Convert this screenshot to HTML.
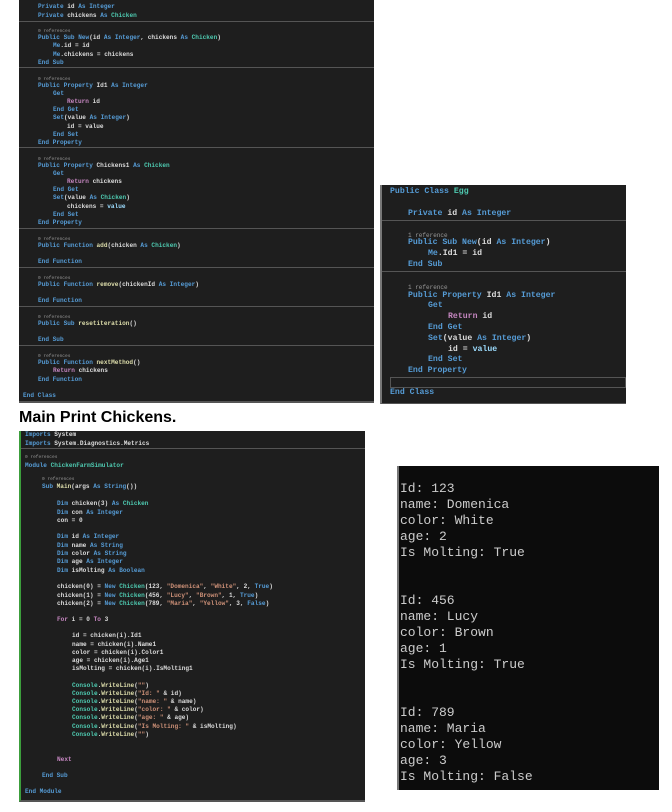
<!DOCTYPE html>
<html><head><meta charset="utf-8"><style>
*{margin:0;padding:0;box-sizing:border-box}
body{width:672px;height:812px;background:#fff;position:relative;overflow:hidden;font-family:"Liberation Mono",monospace}
.box{position:absolute;background:#1e1e1e;overflow:hidden}
.l{position:absolute;white-space:pre;line-height:1}
.s .l{font-size:6.1px;font-weight:bold;color:#dcdcdc}
.e .l{font-size:8.2px;color:#dcdcdc;font-weight:bold}
.box .r{font-size:4.5px;font-weight:normal;color:#999}
.box.e .r{font-size:6px}
.box .k{color:#569cd6}.box .t{color:#4ec9b0}.box .p{color:#c586c0}.box .q{color:#ce9178}.box .v{color:#9cdcfe}.box .w{color:#dcdcdc}.box .f{color:#dcdcaa}
.sep{position:absolute;left:0;right:0;height:1px;background:#555}
.con{position:absolute;left:397px;top:466px;width:262px;height:324px;background:#0c0c0c;border-left:2px solid #777}
.con div{position:absolute;left:1px;font-size:13px;color:#cccccc;white-space:pre;line-height:1}
</style></head><body>

<div class="box s" style="left:19px;top:0;width:355px;height:403px;border-bottom:2px solid #555">
<div class="l k" style="left:19px;top:4px">Private <span class="w">id</span> As Integer</div>
<div class="l k" style="left:19px;top:13px">Private <span class="w">chickens</span> As <span class="t">Chicken</span></div>
<div class="sep" style="top:21px"></div>
<div class="l r" style="left:19px;top:30px">0 references</div>
<div class="l k" style="left:19px;top:35px">Public Sub New<span class="w">(id</span> As Integer<span class="w">, chickens</span> As <span class="t">Chicken</span><span class="w">)</span></div>
<div class="l" style="left:34px;top:43px"><span class="k">Me</span>.id = id</div>
<div class="l" style="left:34px;top:52px"><span class="k">Me</span>.chickens = chickens</div>
<div class="l k" style="left:19px;top:60px">End Sub</div>
<div class="sep" style="top:67px"></div>
<div class="l r" style="left:19px;top:78px">0 references</div>
<div class="l k" style="left:19px;top:83px">Public Property <span class="w">Id1</span> As Integer</div>
<div class="l k" style="left:34px;top:91px">Get</div>
<div class="l" style="left:48px;top:99px"><span class="p">Return</span> id</div>
<div class="l k" style="left:34px;top:107px">End Get</div>
<div class="l k" style="left:34px;top:115px">Set<span class="w">(value</span> As Integer<span class="w">)</span></div>
<div class="l" style="left:48px;top:124px">id = value</div>
<div class="l k" style="left:34px;top:132px">End Set</div>
<div class="l k" style="left:19px;top:140px">End Property</div>
<div class="sep" style="top:147px"></div>
<div class="l r" style="left:19px;top:158px">0 references</div>
<div class="l k" style="left:19px;top:163px">Public Property <span class="w">Chickens1</span> As <span class="t">Chicken</span></div>
<div class="l k" style="left:34px;top:171px">Get</div>
<div class="l" style="left:48px;top:179px"><span class="p">Return</span> chickens</div>
<div class="l k" style="left:34px;top:187px">End Get</div>
<div class="l k" style="left:34px;top:195px">Set<span class="w">(value</span> As <span class="t">Chicken</span><span class="w">)</span></div>
<div class="l" style="left:48px;top:204px">chickens = <span class="v">value</span></div>
<div class="l k" style="left:34px;top:212px">End Set</div>
<div class="l k" style="left:19px;top:220px">End Property</div>
<div class="sep" style="top:228px"></div>
<div class="l r" style="left:19px;top:238px">0 references</div>
<div class="l k" style="left:19px;top:243px">Public Function <span class="f">add</span><span class="w">(chicken</span> As <span class="t">Chicken</span><span class="w">)</span></div>
<div class="l k" style="left:19px;top:259px">End Function</div>
<div class="sep" style="top:267px"></div>
<div class="l r" style="left:19px;top:277px">0 references</div>
<div class="l k" style="left:19px;top:282px">Public Function <span class="f">remove</span><span class="w">(chickenId</span> As Integer<span class="w">)</span></div>
<div class="l k" style="left:19px;top:298px">End Function</div>
<div class="sep" style="top:306px"></div>
<div class="l r" style="left:19px;top:316px">0 references</div>
<div class="l k" style="left:19px;top:321px">Public Sub <span class="f">resetiteration</span><span class="w">()</span></div>
<div class="l k" style="left:19px;top:337px">End Sub</div>
<div class="sep" style="top:345px"></div>
<div class="l r" style="left:19px;top:355px">0 references</div>
<div class="l k" style="left:19px;top:360px">Public Function <span class="f">nextMethod</span><span class="w">()</span></div>
<div class="l" style="left:34px;top:368px"><span class="p">Return</span> chickens</div>
<div class="l k" style="left:19px;top:377px">End Function</div>
<div class="l k" style="left:4px;top:393px">End Class</div>
</div>

<div class="box e" style="left:380px;top:185px;width:246px;height:219px;border-left:2px solid #777;border-bottom:1px solid #555">
<div class="l k" style="left:8px;top:3px">Public Class <span class="t">Egg</span></div>
<div class="l k" style="left:26px;top:25px">Private <span class="w">id</span> As Integer</div>
<div class="sep" style="top:35px"></div>
<div class="l r" style="left:26px;top:48px">1 reference</div>
<div class="l k" style="left:26px;top:54px">Public Sub New<span class="w">(id</span> As Integer<span class="w">)</span></div>
<div class="l" style="left:46px;top:65px"><span class="k">Me</span>.Id1 = id</div>
<div class="l k" style="left:26px;top:76px">End Sub</div>
<div class="sep" style="top:86px"></div>
<div class="l r" style="left:26px;top:100px">1 reference</div>
<div class="l k" style="left:26px;top:107px">Public Property <span class="w">Id1</span> As Integer</div>
<div class="l k" style="left:46px;top:117px">Get</div>
<div class="l" style="left:66px;top:128px"><span class="p">Return</span> id</div>
<div class="l k" style="left:46px;top:139px">End Get</div>
<div class="l k" style="left:46px;top:150px">Set<span class="w">(value</span> As Integer<span class="w">)</span></div>
<div class="l" style="left:66px;top:161px">id = <span class="v">value</span></div>
<div class="l k" style="left:46px;top:171px">End Set</div>
<div class="l k" style="left:26px;top:182px">End Property</div>
<div style="position:absolute;left:8px;right:0;top:192px;height:11px;border:1px solid #555"></div>
<div class="l k" style="left:8px;top:204px">End Class</div>
</div>

<div style="position:absolute;left:19px;top:409px;font:bold 16px 'Liberation Sans',sans-serif;color:#000">Main Print Chickens.</div>

<div class="box s" style="left:19px;top:431px;width:346px;height:371px;border-left:2px solid #3c9e3c;border-bottom:2px solid #555">
<div class="l k" style="left:4px;top:1px">Imports <span class="w">System</span></div>
<div class="l k" style="left:4px;top:10px">Imports <span class="w">System.Diagnostics.Metrics</span></div>
<div class="sep" style="top:17px"></div>
<div class="l r" style="left:4px;top:25px">0 references</div>
<div class="l k" style="left:4px;top:32px">Module <span class="t">ChickenFarmSimulator</span></div>
<div class="l r" style="left:21px;top:47px">0 references</div>
<div class="l k" style="left:21px;top:53px">Sub <span class="f">Main</span><span class="w">(args</span> As String<span class="w">())</span></div>
<div class="l k" style="left:36px;top:70px">Dim <span class="w">chicken(3)</span> As <span class="t">Chicken</span></div>
<div class="l k" style="left:36px;top:79px">Dim <span class="w">con</span> As Integer</div>
<div class="l" style="left:36px;top:87px">con = 0</div>
<div class="l k" style="left:36px;top:103px">Dim <span class="w">id</span> As Integer</div>
<div class="l k" style="left:36px;top:112px">Dim <span class="w">name</span> As String</div>
<div class="l k" style="left:36px;top:120px">Dim <span class="w">color</span> As String</div>
<div class="l k" style="left:36px;top:128px">Dim <span class="w">age</span> As Integer</div>
<div class="l k" style="left:36px;top:137px">Dim <span class="w">isMolting</span> As Boolean</div>
<div class="l" style="left:36px;top:153px">chicken(0) = <span class="k">New</span> <span class="t">Chicken</span>(123, <span class="q">"Domenica"</span>, <span class="q">"White"</span>, 2, <span class="k">True</span>)</div>
<div class="l" style="left:36px;top:162px">chicken(1) = <span class="k">New</span> <span class="t">Chicken</span>(456, <span class="q">"Lucy"</span>, <span class="q">"Brown"</span>, 1, <span class="k">True</span>)</div>
<div class="l" style="left:36px;top:170px">chicken(2) = <span class="k">New</span> <span class="t">Chicken</span>(789, <span class="q">"Maria"</span>, <span class="q">"Yellow"</span>, 3, <span class="k">False</span>)</div>
<div class="l" style="left:36px;top:186px"><span class="p">For</span> i = 0 <span class="p">To</span> 3</div>
<div class="l" style="left:51px;top:202px">id = chicken(i).Id1</div>
<div class="l" style="left:51px;top:211px">name = chicken(i).Name1</div>
<div class="l" style="left:51px;top:219px">color = chicken(i).Color1</div>
<div class="l" style="left:51px;top:227px">age = chicken(i).Age1</div>
<div class="l" style="left:51px;top:235px">isMolting = chicken(i).IsMolting1</div>
<div class="l" style="left:51px;top:252px"><span class="t">Console</span>.<span class="f">WriteLine</span>(<span class="q">""</span>)</div>
<div class="l" style="left:51px;top:260px"><span class="t">Console</span>.<span class="f">WriteLine</span>(<span class="q">"Id: "</span> &amp; id)</div>
<div class="l" style="left:51px;top:268px"><span class="t">Console</span>.<span class="f">WriteLine</span>(<span class="q">"name: "</span> &amp; name)</div>
<div class="l" style="left:51px;top:276px"><span class="t">Console</span>.<span class="f">WriteLine</span>(<span class="q">"color: "</span> &amp; color)</div>
<div class="l" style="left:51px;top:284px"><span class="t">Console</span>.<span class="f">WriteLine</span>(<span class="q">"age: "</span> &amp; age)</div>
<div class="l" style="left:51px;top:293px"><span class="t">Console</span>.<span class="f">WriteLine</span>(<span class="q">"Is Molting: "</span> &amp; isMolting)</div>
<div class="l" style="left:51px;top:301px"><span class="t">Console</span>.<span class="f">WriteLine</span>(<span class="q">""</span>)</div>
<div class="l p" style="left:36px;top:326px">Next</div>
<div class="l k" style="left:21px;top:342px">End Sub</div>
<div class="l k" style="left:4px;top:358px">End Module</div>
</div>

<div class="con">
<div style="top:16px">Id: 123</div>
<div style="top:32px">name: Domenica</div>
<div style="top:48px">color: White</div>
<div style="top:64px">age: 2</div>
<div style="top:80px">Is Molting: True</div>
<div style="top:128px">Id: 456</div>
<div style="top:144px">name: Lucy</div>
<div style="top:160px">color: Brown</div>
<div style="top:176px">age: 1</div>
<div style="top:192px">Is Molting: True</div>
<div style="top:240px">Id: 789</div>
<div style="top:256px">name: Maria</div>
<div style="top:272px">color: Yellow</div>
<div style="top:288px">age: 3</div>
<div style="top:304px">Is Molting: False</div>
</div>
</body></html>
